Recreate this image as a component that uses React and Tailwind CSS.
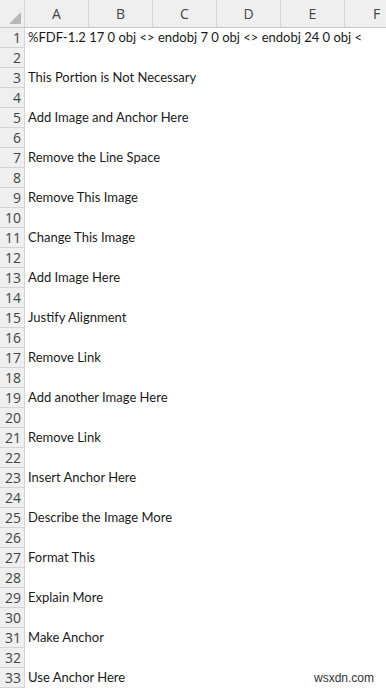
import React from "react";

const columns = ["A", "B", "C", "D", "E", "F"];

const cells = {
  1: "%FDF-1.2 17 0 obj <> endobj 7 0 obj <> endobj 24 0 obj <",
  3: "This Portion is Not Necessary",
  5: "Add Image and Anchor Here",
  7: "Remove the Line Space",
  9: "Remove This Image",
  11: "Change This Image",
  13: "Add Image Here",
  15: "Justify Alignment",
  17: "Remove Link",
  19: "Add another Image Here",
  21: "Remove Link",
  23: "Insert Anchor Here",
  25: "Describe the Image More",
  27: "Format This",
  29: "Explain More",
  31: "Make Anchor",
  33: "Use Anchor Here",
};

const rows = Array.from({ length: 33 }, (_, i) => i + 1);

const App = () => {
  return (
    <div className="relative w-[386px] h-[689px] overflow-hidden bg-white font-['Lato',sans-serif] text-[#222]">
      {/* column headers */}
      <div className="flex h-[28px] bg-[#efefef] border-b border-[#c6c6c6]">
        <div className="relative w-[25px] shrink-0 border-r border-[#d4d4d4]">
          <div className="absolute right-[3px] bottom-[3px] w-0 h-0 border-l-[12px] border-l-transparent border-b-[12px] border-b-[#b7b7b7]" />
        </div>
        {columns.map((col) => (
          <div
            key={col}
            className="w-[64px] shrink-0 flex items-center justify-center border-r border-[#d4d4d4] text-[14px] text-[#444] font-['Open_Sans',sans-serif]"
          >
            {col}
          </div>
        ))}
      </div>

      {/* rows */}
      {rows.map((n) => (
        <div key={n} className="flex h-[20px]">
          <div className="w-[25px] shrink-0 bg-[#efefef] border-r border-b border-[#d4d4d4] flex items-center justify-end pr-[3px] text-[14px] text-[#444] font-['Open_Sans',sans-serif]">
            {n}
          </div>
          <div className="flex-1 flex items-center pl-[3px] whitespace-nowrap text-[13px] text-[#1a1a1a]">
            {cells[n] || ""}
          </div>
        </div>
      ))}

      <div className="absolute right-[12px] bottom-[2px] text-[12px] text-[#333] font-['Liberation_Sans',sans-serif]">
        wsxdn.com
      </div>
    </div>
  );
};

export default App;
